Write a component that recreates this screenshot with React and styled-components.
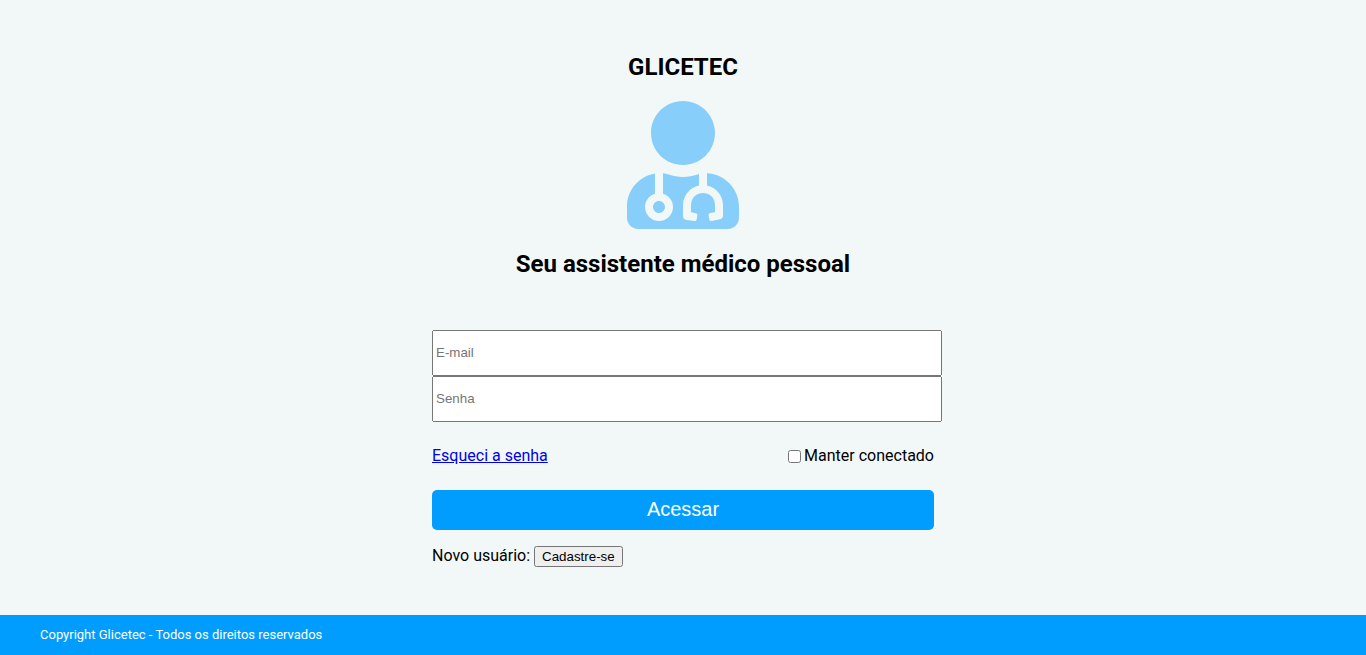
import React from 'react';
import styled, { createGlobalStyle } from 'styled-components';
import { FaUserMd } from 'react-icons/fa';

const GlobalStyle = createGlobalStyle`
  body {
    margin: 0;
    background: #f2f8f8;
    color: #000;
    font-family: Roboto, sans-serif;
    font-size: 16px;
    line-height: 20px;
  }
`;

const Page = styled.div`
  display: flex;
  flex-direction: column;
  min-height: 100vh;
`;

const Main = styled.main`
  flex: 1;
  display: flex;
  flex-direction: column;
  align-items: center;
  padding: 53px 16px 40px;
`;

const Heading = styled.header`
  display: flex;
  flex-direction: column;
  align-items: center;
  gap: 20px;
  margin-bottom: 51px;
  text-align: center;
`;

const Title = styled.h1`
  margin: 0;
  font-size: 24px;
  font-weight: 700;
  line-height: 28px;
`;

const Subtitle = styled(Title)`
  line-height: 30px;
`;

const Logo = styled(FaUserMd)`
  display: block;
  width: 112px;
  height: 128px;
  color: #87cefa;
`;

const Form = styled.form`
  width: 100%;
  max-width: 502px;
`;

const Field = styled.input`
  display: block;
  box-sizing: border-box;
  width: calc(100% + 8px);
  height: 46px;
  padding: 0 2px 2px;
  font-family: 'Liberation Sans', Arial, sans-serif;
`;

const Options = styled.div`
  display: flex;
  justify-content: space-between;
  align-items: center;
  padding: 24px 0;
`;

const Remember = styled.label`
  display: flex;
  align-items: center;
  gap: 3px;
`;

const Checkbox = styled.input`
  width: 13px;
  height: 13px;
  margin: 0;
`;

const Submit = styled.button`
  display: block;
  width: 100%;
  height: 40px;
  padding: 0 6px 2px;
  border: 0;
  border-radius: 5px;
  background: #009dff;
  color: #fff;
  font-family: 'Liberation Sans', Arial, sans-serif;
  font-size: 20px;
  cursor: pointer;
`;

const SignUp = styled.div`
  display: flex;
  align-items: baseline;
  gap: 4px;
  margin-top: 16px;
`;

const SignUpButton = styled.button`
  padding: 1px 6px;
  font-family: 'Liberation Sans', Arial, sans-serif;
`;

const Footer = styled.footer`
  padding: 10px 40px;
  background: #009dff;
  color: #fff;
  font-size: 13px;
`;

export default function App() {
  return (
    <Page>
      <GlobalStyle />
      <Main>
        <Heading>
          <Title>GLICETEC</Title>
          <Logo aria-hidden="true" />
          <Subtitle as="h2">Seu assistente médico pessoal</Subtitle>
        </Heading>
        <Form onSubmit={(event) => event.preventDefault()}>
          <Field type="email" placeholder="E-mail" aria-label="E-mail" />
          <Field type="password" placeholder="Senha" aria-label="Senha" />
          <Options>
            <a href="#senha">Esqueci a senha</a>
            <Remember>
              <Checkbox type="checkbox" />
              Manter conectado
            </Remember>
          </Options>
          <Submit type="submit">Acessar</Submit>
          <SignUp>
            <span>Novo usuário:</span>
            <SignUpButton type="button">Cadastre-se</SignUpButton>
          </SignUp>
        </Form>
      </Main>
      <Footer>Copyright Glicetec - Todos os direitos reservados</Footer>
    </Page>
  );
}
